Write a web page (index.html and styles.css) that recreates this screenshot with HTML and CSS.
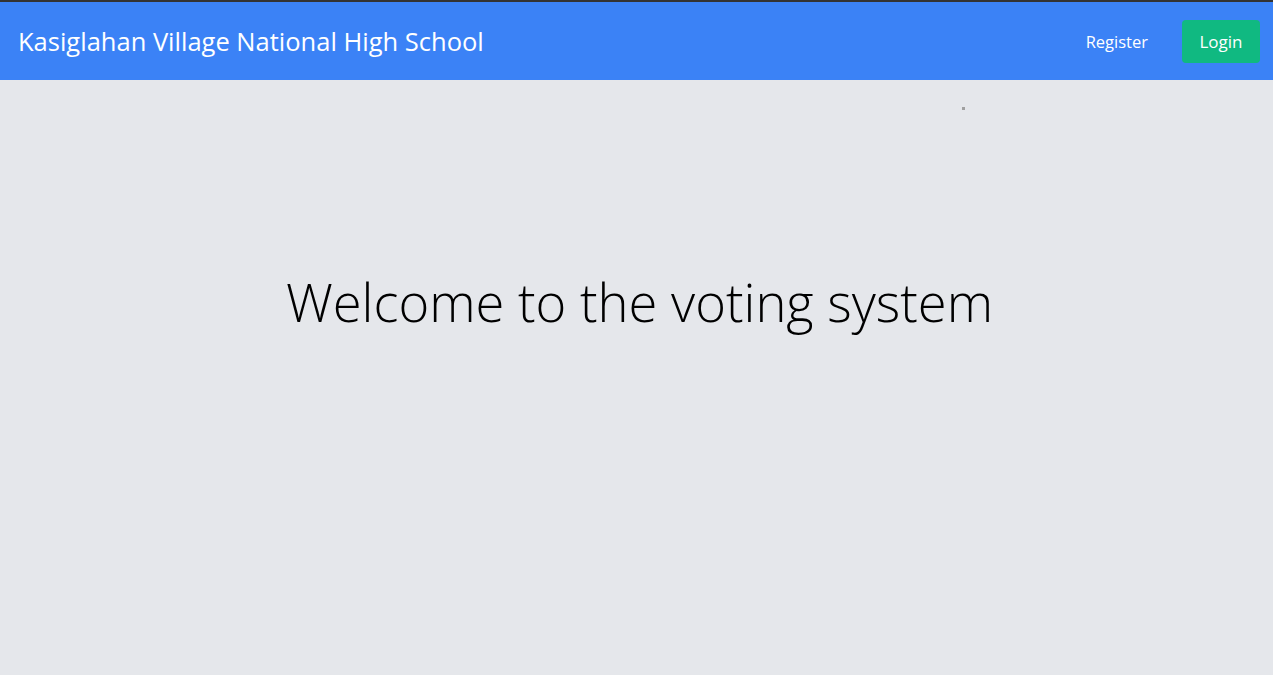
FILE: index.html
```html
<!DOCTYPE html>
<html lang="en">
<head>
<meta charset="utf-8">
<title>Voting System</title>
<link rel="stylesheet" href="styles.css">
</head>
<body>
<div class="page">
  <nav class="navbar">
    <a class="brand" href="#">Kasiglahan Village National High School</a>
    <div class="nav-links">
      <a class="nav-link" href="#">Register</a>
      <a class="btn-login" href="#">Login</a>
    </div>
  </nav>
  <main class="main">
    <span class="dot"></span>
    <h1 class="welcome">Welcome to the voting system</h1>
  </main>
</div>
</body>
</html>
```
FILE: styles.css
```css
html, body {
  margin: 0;
  padding: 0;
  height: 100%;
}
body {
  font-family: "Open Sans", "Noto Sans", sans-serif;
  background: #e5e7eb;
  border-top: 2px solid #333;
  box-sizing: border-box;
}
.page {
  display: flex;
  flex-direction: column;
  height: 100%;
}
.navbar {
  display: flex;
  align-items: center;
  justify-content: space-between;
  height: 78px;
  background: #3b82f6;
  padding: 0 13px 0 18px;
  box-sizing: border-box;
}
.brand {
  color: #fff;
  text-decoration: none;
  font-size: 25.5px;
}
.nav-links {
  display: flex;
  align-items: center;
  gap: 34px;
}
.nav-link {
  color: #fff;
  text-decoration: none;
  font-size: 16.5px;
}
.btn-login {
  display: flex;
  align-items: center;
  justify-content: center;
  width: 78px;
  height: 43px;
  background: #10b981;
  color: #fff;
  border-radius: 4px;
  text-decoration: none;
  font-size: 17px;
}
.main {
  flex: 1;
  position: relative;
  display: flex;
  justify-content: center;
  padding-left: 6px;
}
.dot {
  position: absolute;
  left: 962px;
  top: 27px;
  width: 3px;
  height: 3px;
  background: #a0a0a0;
}
.welcome {
  margin: 186px 0 0;
  font-size: 52.5px;
  font-weight: 300;
  color: #000;
  line-height: 72px;
  height: 72px;
}
```
